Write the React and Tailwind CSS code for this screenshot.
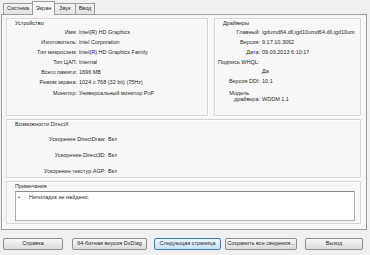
import React from "react";

const Row = ({ label, value, col, h = "h-[10px]" }) => (
  <div className={`flex items-center ${h}`}>
    <div className="text-right shrink-0" style={{ width: col }}>{label}</div>
    <div className="pl-[2px] whitespace-nowrap overflow-hidden">{value}</div>
  </div>
);

const Group = ({ className = "", label, children }) => (
  <div className={`border border-[#d5d5d5] shadow-[inset_1px_1px_0_#ffffff,1px_1px_0_#ffffff] rounded-[1px] ${className}`}>
    <div className="h-[9px] flex items-center pl-[8px]">{label}</div>
    {children}
  </div>
);

const Btn = ({ children, w, ml, focus }) => (
  <div
    className={`h-[12px] flex items-center justify-center border rounded-[2px] ${
      focus
        ? "border-[#3c7fb1] bg-gradient-to-b from-[#eaf6fd] to-[#c4e5f6]"
        : "border-[#8e8f8f] bg-gradient-to-b from-[#f6f6f6] to-[#dcdcdc]"
    }`}
    style={{ width: w, marginLeft: ml }}
  >
    {children}
  </div>
);

export default function App() {
  return (
    <div
      className="w-[370px] h-[255px] bg-[#f0f0f0] text-[#2a2a2a] text-[5.5px] leading-none overflow-hidden pt-[2px]"
      style={{ fontFamily: '"Liberation Sans", Arial, sans-serif' }}
    >
      {/* tabs */}
      <div className="flex items-end h-[12px] pl-[3px] relative z-10">
        <div className="h-[11px] w-[30px] border border-b-0 border-[#9a9ca3] bg-gradient-to-b from-[#f2f2f2] to-[#e3e3e3] flex items-center justify-center">Система</div>
        <div className="h-[14px] w-[23px] -mb-[1px] border border-b-0 border-[#9a9ca3] bg-[#f7f7f7] flex items-center justify-center -ml-[1px]">Экран</div>
        <div className="h-[11px] w-[21px] border border-b-0 border-l-0 border-[#9a9ca3] bg-gradient-to-b from-[#f2f2f2] to-[#e3e3e3] flex items-center justify-center">Звук</div>
        <div className="h-[11px] w-[19px] border border-b-0 border-l-0 border-[#9a9ca3] bg-gradient-to-b from-[#f2f2f2] to-[#e3e3e3] flex items-center justify-center">Ввод</div>
      </div>

      {/* panel */}
      <div className="ml-[1px] w-[366px] h-[216px] border border-[#9a9ca3] bg-[#f7f7f7] pt-[3px] pl-[4px] pr-[5px] flex flex-col gap-[3px]">
        <div className="flex gap-[6px] h-[98px]">
          <Group className="w-[202px]" label="Устройство">
            <Row col={70} label="Имя:" value="Intel(R) HD Graphics" />
            <Row col={70} label="Изготовитель:" value="Intel Corporation" />
            <Row col={70} label="Тип микросхем:" value="Intel(R) HD Graphics Family" />
            <Row col={70} label="Тип ЦАП:" value="Internal" />
            <Row col={70} label="Всего памяти:" value="1696 MB" />
            <Row col={70} label="Режим экрана:" value="1024 x 768 (32 bit) (75Hz)" />
            <Row col={70} label="Монитор:" value="Универсальный монитор PnP" h="h-[11px]" />
          </Group>
          <Group className="flex-1 overflow-hidden" label="Драйверы">
            <Row col={45} label="Главный:" value="igdumd64.dll,igd10umd64.dll,igd10um" />
            <Row col={45} label="Версия:" value="9.17.10.3062" />
            <Row col={45} label="Дата:" value="09.03.2013 6:10:17" />
            <div className="h-[9px] flex items-center pl-[3px]">Подпись WHQL:</div>
            <Row col={45} label="" value="Да" h="h-[10px]" />
            <Row col={45} label="Версия DDI:" value="10.1" />
            <div className="flex items-end h-[15px]">
              <div className="w-[45px] text-right leading-[6px] shrink-0">
                <div className="pr-[11px]">Модель</div>
                <div>драйвера:</div>
              </div>
              <div className="pl-[2px] leading-[6px]">WDDM 1.1</div>
            </div>
          </Group>
        </div>

        <Group className="h-[59px]" label="Возможности DirectX">
          <div className="h-[3px]" />
          <Row col={99} label="Ускорение DirectDraw:" value="Вкл" h="h-[16px]" />
          <Row col={99} label="Ускорение Direct3D:" value="Вкл" h="h-[16px]" />
          <Row col={99} label="Ускорение текстур AGP:" value="Вкл" h="h-[15px]" />
        </Group>

        <Group className="h-[43px]" label="Примечания">
          <div className="ml-[8px] mr-[5px] h-[30px] bg-white border border-[#abadb3] border-t-[#8a8c92] pt-[3px] flex">
            <span className="pl-[2px] w-[13px]">•</span>
            <span>Неполадок не найдено.</span>
          </div>
        </Group>
      </div>

      {/* buttons */}
      <div className="flex mt-[8px]">
        <Btn w={60} ml={3}>Справка</Btn>
        <Btn w={75} ml={9}>64-битная версия DxDiag</Btn>
        <Btn w={67} ml={7} focus>Следующая страница</Btn>
        <Btn w={72} ml={4}>Сохранить все сведения...</Btn>
        <Btn w={58} ml={8}>Выход</Btn>
      </div>
    </div>
  );
}
